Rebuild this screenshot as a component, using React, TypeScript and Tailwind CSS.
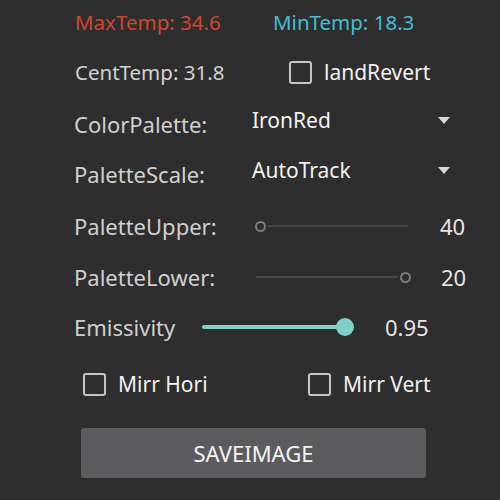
import React from "react";

const font = { fontFamily: "'Noto Sans', Roboto, sans-serif" };

function Box() {
  return <div className="w-[23px] h-[23px] border-2 border-[#c4c4c4] rounded-[3px] shrink-0" />;
}

function Caret() {
  return (
    <svg width="12" height="7" viewBox="0 0 12 7" className="block">
      <polygon points="0,0 12,0 6,7" fill="#d8d8d8" />
    </svg>
  );
}

function RingThumb() {
  return <div className="w-[11px] h-[11px] rounded-full border-2 border-[#7c7c7c] bg-[#2e2e2e] shrink-0" />;
}

export default function App() {
  return (
    <div className="w-[500px] h-[500px] bg-[#2e2e2e] overflow-hidden leading-none" style={font}>
      {/* Row 1 */}
      <div className="h-[44px] flex items-center pl-[75px] text-[20.5px]">
        <span className="w-[198px] text-[#d4452c]">MaxTemp: 34.6</span>
        <span className="text-[#3ec0d6]">MinTemp: 18.3</span>
      </div>
      {/* Row 2 */}
      <div className="h-[56px] flex items-center pl-[75px]">
        <span className="w-[214px] text-[20.5px] text-[#d2d2d2]">CentTemp: 31.8</span>
        <Box />
        <span className="ml-[12px] text-[21px] text-[#f2f2f2]">landRevert</span>
      </div>
      {/* Row 3 */}
      <div className="h-[48px] flex items-center pl-[74px]">
        <span className="w-[178px] text-[22px] text-[#d0d0d0]">ColorPalette:</span>
        <span className="w-[186px] text-[21px] text-[#f2f2f2] pb-2">IronRed</span>
        <span className="pb-2"><Caret /></span>
      </div>
      {/* Row 4 */}
      <div className="h-[52px] flex items-center pl-[74px]">
        <span className="w-[178px] text-[22px] text-[#d0d0d0]">PaletteScale:</span>
        <span className="w-[186px] text-[21px] text-[#f2f2f2] pb-2">AutoTrack</span>
        <span className="pb-2"><Caret /></span>
      </div>
      {/* Row 5 */}
      <div className="h-[52px] flex items-center pl-[74px]">
        <span className="w-[181px] text-[22px] text-[#d0d0d0]">PaletteUpper:</span>
        <div className="w-[153px] flex items-center">
          <RingThumb />
          <div className="flex-1 h-[2px] bg-[#474747] ml-[2px]" />
        </div>
        <span className="ml-[32px] text-[22px] text-[#e6e6e6]">40</span>
      </div>
      {/* Row 6 */}
      <div className="h-[50px] flex items-center pl-[74px]">
        <span className="w-[182px] text-[22px] text-[#d0d0d0]">PaletteLower:</span>
        <div className="w-[155px] flex items-center">
          <div className="flex-1 h-[2px] bg-[#474747] mr-[2px]" />
          <RingThumb />
        </div>
        <span className="ml-[30px] text-[22px] text-[#e6e6e6]">20</span>
      </div>
      {/* Row 7 */}
      <div className="h-[50px] flex items-center pl-[74px]">
        <span className="w-[128px] text-[22px] text-[#d0d0d0]">Emissivity</span>
        <div className="w-[152px] flex items-center">
          <div className="flex-1 h-[4px] bg-[#7fd0c8] rounded-l-full -mr-[2px]" />
          <div className="w-[18px] h-[18px] rounded-full bg-[#7fd0c8] shrink-0" />
        </div>
        <span className="ml-[31px] text-[22px] text-[#e6e6e6]">0.95</span>
      </div>
      {/* Row 8 */}
      <div className="h-[64px] flex items-center pl-[83px] text-[21px]">
        <Box />
        <span className="ml-[12px] w-[190px] text-[#f2f2f2]">Mirr Hori</span>
        <Box />
        <span className="ml-[12px] text-[#f2f2f2]">Mirr Vert</span>
      </div>
      {/* Button */}
      <div className="mt-[12px] ml-[81px] w-[345px] h-[50px] bg-[#5c5c5e] rounded-[3px] flex items-center justify-center text-[22px] text-[#f4f4f4]">
        SAVEIMAGE
      </div>
    </div>
  );
}
